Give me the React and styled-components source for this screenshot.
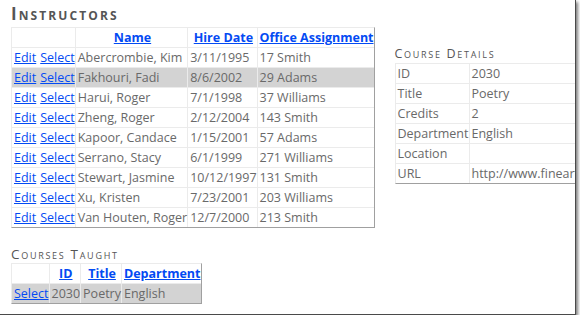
import React from "react";
import styled, { createGlobalStyle } from "styled-components";

const GlobalStyle = createGlobalStyle`
  html, body {
    margin: 0;
    padding: 0;
    background: #fff;
  }
  body {
    font-family: "Open Sans", "Liberation Sans", sans-serif;
    font-size: 12.5px;
    color: #696969;
  }
`;

const instructors = [
  ["Abercrombie, Kim", "3/11/1995", "17 Smith"],
  ["Fakhouri, Fadi", "8/6/2002", "29 Adams"],
  ["Harui, Roger", "7/1/1998", "37 Williams"],
  ["Zheng, Roger", "2/12/2004", "143 Smith"],
  ["Kapoor, Candace", "1/15/2001", "57 Adams"],
  ["Serrano, Stacy", "6/1/1999", "271 Williams"],
  ["Stewart, Jasmine", "10/12/1997", "131 Smith"],
  ["Xu, Kristen", "7/23/2001", "203 Williams"],
  ["Van Houten, Roger", "12/7/2000", "213 Smith"],
];

const details = [
  ["ID", "2030"],
  ["Title", "Poetry"],
  ["Credits", "2"],
  ["Department", "English"],
  ["Location", ""],
  ["URL", "http://www.finearts.yale.edu"],
];

const Frame = styled.div`
  box-sizing: border-box;
  width: 576px;
  height: 315px;
  padding: 4px 0 0 11px;
  overflow: hidden;
  border-right: 1px solid #4a4a4a;
  border-bottom: 1px solid #4a4a4a;
  box-shadow: 2px 2px 3px rgba(0, 0, 0, 0.5);
`;

const Top = styled.div`
  display: flex;
  align-items: flex-start;
  gap: 20px;
`;

const Side = styled.div`
  padding-top: 41px;
  flex-shrink: 0;
`;

const Title = styled.h2`
  margin: 0 0 3px;
  font-size: 17px;
  line-height: 20px;
  font-weight: bold;
  font-variant: small-caps;
  letter-spacing: 2.1px;
  color: #555;
`;

const SubTitle = styled.h3`
  margin: ${(p) => (p.$gap ? "17px 0 0" : "0")};
  font-size: ${(p) => p.$size || 13}px;
  line-height: 18px;
  font-weight: normal;
  font-variant: small-caps;
  letter-spacing: 1.7px;
  color: #555;
`;

const Grid = styled.table`
  border-collapse: separate;
  border-spacing: 0;
  border-style: solid;
  border-width: 1px;
  border-color: #ebebeb #a0a0a0 #a0a0a0 #ebebeb;
`;

const Cell = styled.td`
  padding: 0 0 0 2px;
  height: 19px;
  line-height: 19px;
  white-space: nowrap;
  border-right: 1px solid #ebebeb;
  border-bottom: 1px solid #ebebeb;
  background: ${(p) => (p.$selected ? "#d3d3d3" : "#fff")};
  &:last-child {
    border-right: none;
  }
  tr:last-child > & {
    border-bottom: none;
  }
`;

const Head = styled(Cell).attrs({ as: "th" })`
  text-align: center;
  font-weight: bold;
`;

const Link = styled.a`
  color: #034af3;
  text-decoration: underline;
  cursor: pointer;
  & + & {
    margin-left: 4px;
  }
`;

export default function App() {
  return (
    <>
      <GlobalStyle />
      <Frame>
        <Top>
          <div>
            <Title>Instructors</Title>
            <Grid>
              <tbody>
                <tr>
                  <Head />
                  <Head><Link>Name</Link></Head>
                  <Head><Link>Hire Date</Link></Head>
                  <Head><Link>Office Assignment</Link></Head>
                </tr>
                {instructors.map(([name, date, office], i) => (
                  <tr key={name}>
                    <Cell $selected={i === 1}>
                      <Link>Edit</Link>
                      <Link>Select</Link>
                    </Cell>
                    <Cell $selected={i === 1}>{name}</Cell>
                    <Cell $selected={i === 1}>{date}</Cell>
                    <Cell $selected={i === 1}>{office}</Cell>
                  </tr>
                ))}
              </tbody>
            </Grid>
          </div>
          <Side>
            <SubTitle $size={12.5}>Course Details</SubTitle>
            <Grid>
              <tbody>
                {details.map(([k, v]) => (
                  <tr key={k}>
                    <Cell>{k}</Cell>
                    <Cell>{v}</Cell>
                  </tr>
                ))}
              </tbody>
            </Grid>
          </Side>
        </Top>
        <SubTitle $gap $size={13.5}>Courses Taught</SubTitle>
        <Grid>
          <tbody>
            <tr>
              <Head />
              <Head><Link>ID</Link></Head>
              <Head><Link>Title</Link></Head>
              <Head><Link>Department</Link></Head>
            </tr>
            <tr>
              <Cell $selected><Link>Select</Link></Cell>
              <Cell $selected>2030</Cell>
              <Cell $selected>Poetry</Cell>
              <Cell $selected>English</Cell>
            </tr>
          </tbody>
        </Grid>
      </Frame>
    </>
  );
}
